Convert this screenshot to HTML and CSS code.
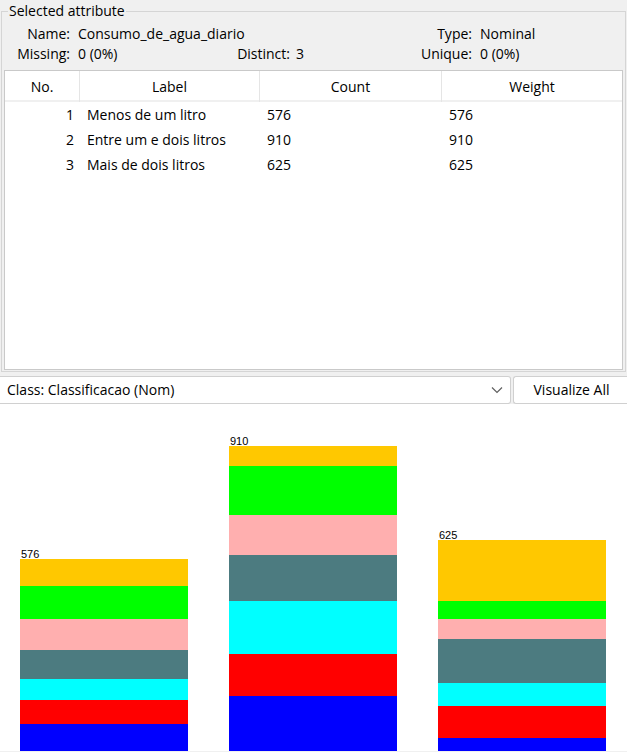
FILE: index.html
```html
<!DOCTYPE html>
<html>
<head>
<meta charset="utf-8">
<link rel="stylesheet" href="styles.css">
</head>
<body>
<div class="top">
  <fieldset class="group">
    <legend class="group-title">Selected attribute</legend>
    <div class="info">
      <span class="k">Name:</span><span class="v wide">Consumo_de_agua_diario</span>
      <span class="k c5">Type:</span><span class="v">Nominal</span>
      <span class="k">Missing:</span><span class="v">0 (0%)</span>
      <span class="k">Distinct:</span><span class="v v2">3</span>
      <span class="k">Unique:</span><span class="v">0 (0%)</span>
    </div>
    <div class="table">
      <div class="thead">
        <div class="th">No.</div>
        <div class="th">Label</div>
        <div class="th">Count</div>
        <div class="th last">Weight</div>
      </div>
      <div class="tr">
        <div class="td num">1</div><div class="td">Menos de um litro</div><div class="td">576</div><div class="td">576</div>
      </div>
      <div class="tr">
        <div class="td num">2</div><div class="td">Entre um e dois litros</div><div class="td">910</div><div class="td">910</div>
      </div>
      <div class="tr">
        <div class="td num">3</div><div class="td">Mais de dois litros</div><div class="td">625</div><div class="td">625</div>
      </div>
    </div>
  </fieldset>
</div>
<div class="controls">
  <div class="select">
    <span>Class: Classificacao (Nom)</span>
    <svg class="chev" width="12" height="8" viewBox="0 0 12 8"><path d="M1 1.5 L6 6.5 L11 1.5" fill="none" stroke="#606060" stroke-width="1.2"/></svg>
  </div>
  <div class="button">Visualize All</div>
</div>
<div class="chart">
  <div class="bar-col">
    <div class="bar-label">576</div>
    <div class="bar">
      <div class="seg orange" style="height:27px"></div>
      <div class="seg green" style="height:33px"></div>
      <div class="seg pink" style="height:31px"></div>
      <div class="seg teal" style="height:29px"></div>
      <div class="seg cyan" style="height:21px"></div>
      <div class="seg red" style="height:24px"></div>
      <div class="seg blue" style="height:27px"></div>
    </div>
  </div>
  <div class="bar-col">
    <div class="bar-label">910</div>
    <div class="bar">
      <div class="seg orange" style="height:20px"></div>
      <div class="seg green" style="height:49px"></div>
      <div class="seg pink" style="height:40px"></div>
      <div class="seg teal" style="height:46px"></div>
      <div class="seg cyan" style="height:53px"></div>
      <div class="seg red" style="height:42px"></div>
      <div class="seg blue" style="height:55px"></div>
    </div>
  </div>
  <div class="bar-col">
    <div class="bar-label">625</div>
    <div class="bar">
      <div class="seg orange" style="height:61px"></div>
      <div class="seg green" style="height:18px"></div>
      <div class="seg pink" style="height:20px"></div>
      <div class="seg teal" style="height:44px"></div>
      <div class="seg cyan" style="height:23px"></div>
      <div class="seg red" style="height:32px"></div>
      <div class="seg blue" style="height:13px"></div>
    </div>
  </div>
</div>
</body>
</html>
```
FILE: styles.css
```css
html, body {
  margin: 0;
  padding: 0;
}
body {
  width: 627px;
  height: 752px;
  overflow: hidden;
  background: #f0f0f0;
  font-family: "Open Sans", "Noto Sans", sans-serif;
  font-size: 14px;
  color: #000;
}
.top {
  height: 376px;
  box-sizing: border-box;
}
.group {
  margin: 0 1px;
  padding: 0 2px 2px 2px;
  border: 1px solid #d5d5d5;
  height: 372px;
  box-sizing: border-box;
  min-width: 0;
}
.group-title {
  margin-left: 4px;
  padding: 0 1px;
  line-height: 22px;
  height: 22px;
}
.info {
  display: grid;
  grid-template-columns: 66px 150px 70px 110px 72px auto;
  grid-auto-rows: 20px;
  line-height: 20px;
  white-space: nowrap;
  margin-top: 2px;
}
.k {
  text-align: right;
}
.v {
  padding-left: 8px;
}
.v2 {
  padding-left: 6px;
}
.wide {
  grid-column: 2 / 5;
}
.c5 {
  grid-column: 5;
}
.table {
  margin-top: 6px;
  height: 300px;
  box-sizing: border-box;
  border: 1px solid #c9c9c9;
  background: #fff;
}
.thead, .tr {
  display: grid;
  grid-template-columns: 75px 180px 182px 1fr;
}
.thead {
  height: 31px;
  border-bottom: 2px solid #f0f0f0;
  box-sizing: border-box;
}
.th {
  text-align: center;
  line-height: 31px;
  border-right: 1px solid #e5e5e5;
}
.th.last {
  border-right: none;
}
.tr {
  height: 25px;
  line-height: 25px;
}
.td {
  padding-left: 7px;
  white-space: nowrap;
}
.td.num {
  text-align: right;
  padding-left: 0;
  padding-right: 6px;
}
.controls {
  display: flex;
  height: 28px;
  gap: 2px;
}
.select {
  width: 511px;
  box-sizing: border-box;
  background: #fff;
  border: 1px solid #d0d0d0;
  border-left: none;
  border-radius: 0 3px 3px 0;
  display: flex;
  align-items: center;
  justify-content: space-between;
  padding: 0 7px 1px 7px;
}
.button {
  flex: 1;
  box-sizing: border-box;
  background: #fff;
  border: 1px solid #d0d0d0;
  border-right: none;
  border-radius: 3px 0 0 3px;
  display: flex;
  align-items: center;
  justify-content: center;
  padding: 0 0 1px 2px;
}
.chart {
  height: 347px;
  background: #fff;
  display: flex;
  align-items: flex-end;
  gap: 41px;
  padding-left: 20px;
}
.bar-col {
  width: 168px;
  display: flex;
  flex-direction: column;
}
.bar-label {
  font-family: "Liberation Sans", sans-serif;
  font-size: 11px;
  line-height: 10px;
  height: 10px;
  padding-left: 1px;
}
.bar {
  display: flex;
  flex-direction: column;
}
.seg { width: 100%; }
.orange { background: #ffc800; }
.green { background: #00ff00; }
.pink { background: #ffafaf; }
.teal { background: #4c7b80; }
.cyan { background: #00ffff; }
.red { background: #ff0000; }
.blue { background: #0000ff; }
```
